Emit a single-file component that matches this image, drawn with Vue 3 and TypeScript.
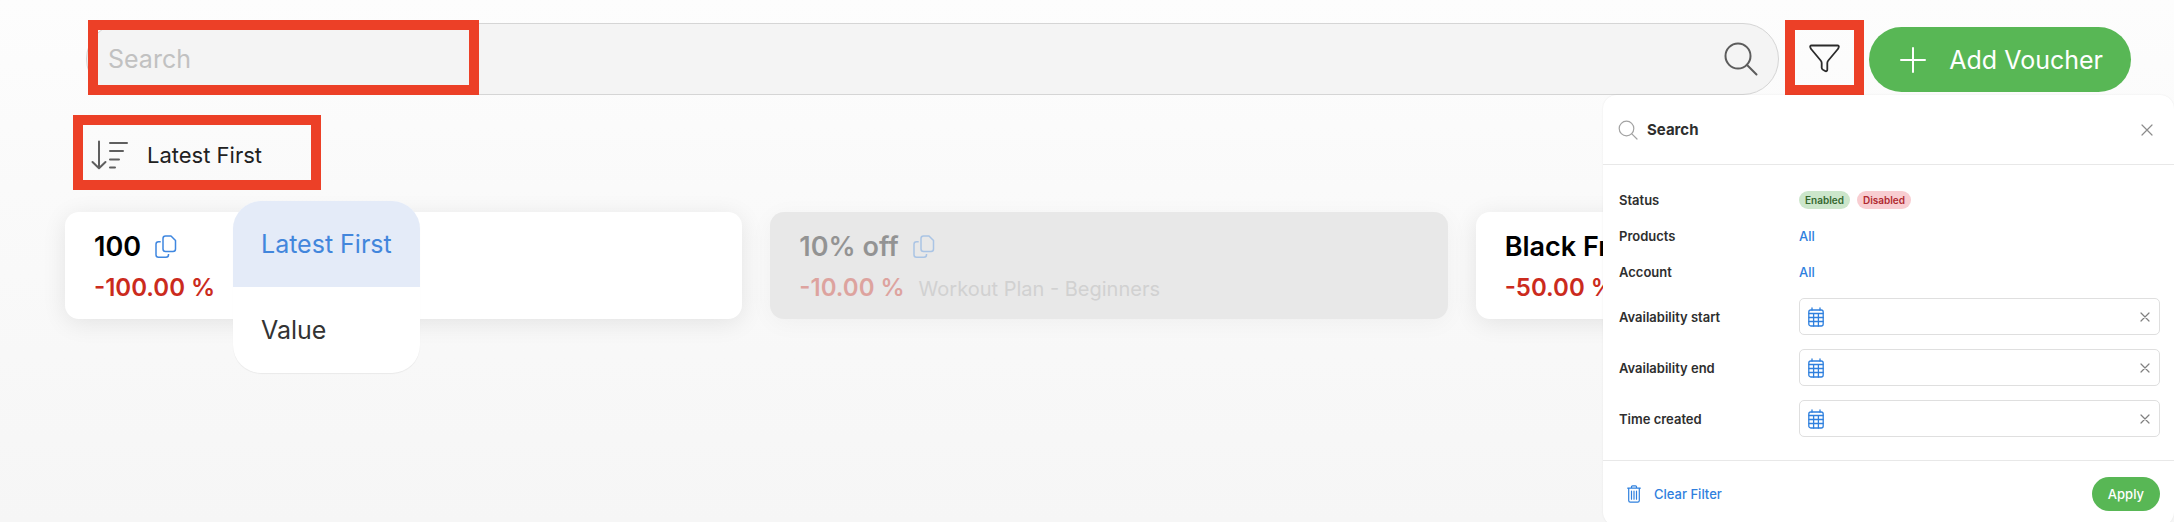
<script setup lang="ts">
import { ref } from 'vue'

interface Voucher {
  name: string
  discount: string
  product?: string
  disabled?: boolean
}

interface DateField {
  id: string
  label: string
}

const vouchers: Voucher[] = [
  { name: '100', discount: '-100.00 %' },
  { name: '10% off', discount: '-10.00 %', product: 'Workout Plan - Beginners', disabled: true },
  { name: 'Black Fr', discount: '-50.00 %' },
]

const sortOptions: string[] = ['Latest First', 'Value']
const sortBy = ref<string>('Latest First')
const query = ref<string>('')

const dateFields: DateField[] = [
  { id: 'availability-start', label: 'Availability start' },
  { id: 'availability-end', label: 'Availability end' },
  { id: 'time-created', label: 'Time created' },
]
const dates = ref<Record<string, string>>({
  'availability-start': '',
  'availability-end': '',
  'time-created': '',
})

function clearDates(): void {
  dateFields.forEach((field) => {
    dates.value[field.id] = ''
  })
}
</script>

<template>
  <main class="page">
    <header class="toolbar">
      <div class="search marked">
        <input v-model="query" class="search-input" type="text" placeholder="Search" aria-label="Search" />
        <button class="search-button" type="button" aria-label="Run search">
          <svg width="34" height="34" viewBox="0 0 34 34" fill="none" stroke="#5c5c5c" stroke-width="2" stroke-linecap="round">
            <circle cx="14" cy="14" r="12.5" />
            <path d="M22.8 22.8 32.5 32.5" />
          </svg>
        </button>
      </div>
      <button class="filter" type="button" aria-label="Filter">
        <svg width="32" height="30" viewBox="0 0 32 30" fill="none" stroke="#2b2b2b" stroke-width="1.800" stroke-linejoin="round">
          <path d="M2.500 2.500H28.500Q30.300 2.500 29.700 4.300L28.900 6 19.300 17.500Q18.300 18.700 18.300 20V26.500Q18.300 28.500 16.500 28.200L14 26.800Q12.700 26 12.700 24.800V20Q12.700 18.700 11.700 17.500L2.100 6 1.300 4.300Q.7 2.500 2.500 2.500Z" />
        </svg>
      </button>
      <button class="add" type="button">
        <svg width="26" height="26" viewBox="0 0 26 26" fill="none" stroke="#fff" stroke-width="2" stroke-linecap="round">
          <path d="M13 1v24M1 13h24" />
        </svg>
        <span>Add Voucher</span>
      </button>

      <form class="panel" @submit.prevent>
        <div class="panel-head">
          <svg width="20" height="20" viewBox="0 0 20 20" fill="none" stroke="#a3a3a3" stroke-width="1.200" stroke-linecap="round">
            <circle cx="8.500" cy="8.500" r="7.300" />
            <path d="M13.800 13.800 19 19" />
          </svg>
          <h2>Search</h2>
          <button class="icon-button" type="button" aria-label="Close">
            <svg width="12" height="12" viewBox="0 0 12 12" stroke="#8c8c8c" stroke-width="1.200" stroke-linecap="round">
              <path d="M1 1 11 11M11 1 1 11" />
            </svg>
          </button>
        </div>

        <div class="panel-body">
          <div class="row">
            <span>Status</span>
            <div class="badges">
              <button class="badge enabled" type="button">Enabled</button>
              <button class="badge disabled" type="button">Disabled</button>
            </div>
          </div>
          <div class="row">
            <span>Products</span>
            <a href="#products">All</a>
          </div>
          <div class="row">
            <span>Account</span>
            <a href="#account">All</a>
          </div>
          <div v-for="field in dateFields" :key="field.id" class="row date-row">
            <label :for="field.id">{{ field.label }}</label>
            <div class="date-box">
              <svg width="16" height="20" viewBox="0 0 16 20" fill="none" stroke="#2f80de" stroke-width="1.300" stroke-linecap="round">
                <rect x=".8" y="3" width="14.400" height="16" rx="2" />
                <path d="M4 1v2M12 1v2M1 6.500h14M1 10.500h14M1 14.500h14M5.600 6.500V19M10.400 6.500V19" />
              </svg>
              <input :id="field.id" v-model="dates[field.id]" type="text" />
              <button class="icon-button" type="button" :aria-label="'Clear ' + field.label" @click="dates[field.id] = ''">
                <svg width="10" height="10" viewBox="0 0 10 10" stroke="#808080" stroke-width="1.200" stroke-linecap="round">
                  <path d="M1 1 9 9M9 1 1 9" />
                </svg>
              </button>
            </div>
          </div>
        </div>

        <div class="panel-foot">
          <button class="clear" type="button" @click="clearDates">
            <svg width="14" height="18" viewBox="0 0 14 18" fill="none" stroke="#2f80de" stroke-width="1.200" stroke-linecap="round" stroke-linejoin="round">
              <path d="M.7 3.200h12.600M4.500 3V1.800q0-1 1-1h3q1 0 1 1V3M1.700 3.400V15.500q0 1.700 1.600 1.700h7.400q1.600 0 1.600-1.700V3.400M4.500 6.200v8M7 6.200v8M9.500 6.200v8" />
            </svg>
            <span>Clear Filter</span>
          </button>
          <button class="apply" type="submit">Apply</button>
        </div>
      </form>
    </header>

    <div class="sort">
      <button class="sort-button" type="button" aria-haspopup="listbox">
        <svg width="38" height="30" viewBox="0 0 38 30" fill="none" stroke="#5f5f5f" stroke-width="2" stroke-linecap="round" stroke-linejoin="round">
          <path d="M8 1.500V28M1.500 22 8 28.300 14.500 22M19 3h17M19 11h13M19 19.500h9M19 27.500h5" />
        </svg>
        <span>{{ sortBy }}</span>
      </button>
      <div class="menu" role="listbox" aria-label="Sort order">
        <button
          v-for="option in sortOptions"
          :key="option"
          type="button"
          role="option"
          :aria-selected="option === sortBy"
          :class="['menu-item', { selected: option === sortBy }]"
          @click="sortBy = option"
        >
          {{ option }}
        </button>
      </div>
    </div>

    <section class="cards">
      <article v-for="voucher in vouchers" :key="voucher.name" :class="['card', { inactive: voucher.disabled }]">
        <div class="title">
          <h3>{{ voucher.name }}</h3>
          <button class="icon-button" type="button" :aria-label="'Copy ' + voucher.name">
            <svg width="22" height="24" viewBox="0 0 22 24" fill="none" stroke="#3f87e0" stroke-width="1.500" stroke-linejoin="round">
              <path d="M10.500 1H16l4.500 4.500V14q0 2.500-2.500 2.500h-7.500Q8 16.500 8 14V3.500Q8 1 10.500 1Z" />
              <path d="M5.700 6.800H3.500Q1 6.800 1 9.300v10.500q0 2.500 2.500 2.500H11q2.500 0 2.500-2.500v-.8" />
            </svg>
          </button>
        </div>
        <div class="details">
          <strong>{{ voucher.discount }}</strong>
          <span v-if="voucher.product">{{ voucher.product }}</span>
        </div>
      </article>
    </section>
  </main>
</template>

<style>
body {
  margin: 0;
}
</style>

<style scoped>
.page {
  position: relative;
  box-sizing: border-box;
  min-height: 100vh;
  padding-top: 20px;
  overflow: hidden;
  background: linear-gradient(#fdfdfd, #fafafa 36%, #f6f6f6);
  color: #212121;
  font-family: Inter, "Liberation Sans", sans-serif;
}

button,
input {
  margin: 0;
  padding: 0;
  border: 0;
  background: none;
  color: inherit;
  font: inherit;
}

button {
  cursor: pointer;
}

svg {
  display: block;
  flex: none;
}

h2,
h3 {
  margin: 0;
}

a {
  color: #2f80de;
  text-decoration: none;
}

.toolbar {
  position: relative;
  z-index: 3;
  display: flex;
  align-items: center;
  height: 75px;
  padding: 0 43px 0 86px;
}

.search {
  position: relative;
  box-sizing: border-box;
  display: flex;
  flex: 1;
  align-items: center;
  align-self: flex-end;
  height: 72px;
  margin-right: 6px;
  padding: 0 20px 0 21px;
  border: 1px solid #d5d5d5;
  border-radius: 36px;
  background: #f4f4f4;
}

.marked::after {
  position: absolute;
  top: -4px;
  left: 1px;
  box-sizing: border-box;
  width: 391px;
  height: 75px;
  border: 10px solid #ec4027;
  content: "";
  pointer-events: none;
}

.search-input {
  flex: 1;
  min-width: 0;
  height: 100%;
  font-size: 25px;
  outline: none;
}

.search-input::placeholder {
  color: #c1c1c1;
  opacity: 1;
}

.filter {
  box-sizing: border-box;
  display: grid;
  place-items: center;
  width: 79px;
  height: 75px;
  margin-right: 5px;
  border: 10px solid #ec4027;
}

.add {
  display: flex;
  align-items: center;
  gap: 23px;
  height: 65px;
  margin-top: 4px;
  padding: 0 28px 0 31px;
  border-radius: 33px;
  background: #58b755;
  color: #fff;
  font-size: 25px;
  white-space: nowrap;
}

.panel {
  position: absolute;
  top: 100%;
  right: 0;
  box-sizing: border-box;
  width: 571px;
  max-width: 100%;
  border-radius: 14px;
  background: #fff;
  box-shadow: 0 0 2px rgba(0, 0, 0, 0.08);
  color: #2e2e2e;
  font-size: 13px;
  font-weight: 600;
}

.panel-head {
  display: flex;
  align-items: center;
  gap: 9px;
  height: 69px;
  padding: 0 21px 0 15px;
  border-bottom: 1px solid #e8e8e8;
}

.panel-head h2 {
  flex: 1;
  font-size: 15px;
  font-weight: 700;
}

.icon-button {
  display: grid;
  place-items: center;
}

.panel-body {
  padding: 17px 14px 23px 16px;
}

.row {
  display: grid;
  grid-template-columns: 180px 1fr;
  align-items: center;
  height: 36px;
}

.date-row {
  height: 37px;
  margin-bottom: 14px;
}

.row + .date-row {
  margin-top: 8px;
}

.date-row + .date-row {
  margin-top: 0;
}

.date-row:last-child {
  margin-bottom: 0;
}

.badges {
  display: flex;
  gap: 7px;
}

.badge {
  height: 18px;
  padding: 0 6px;
  border-radius: 9px;
  font-size: 10px;
  font-weight: 600;
}

.enabled {
  background: #cce6cb;
  color: #35682f;
}

.disabled {
  background: #f8cdd1;
  color: #b02a30;
}

.row a {
  font-weight: 500;
}

.date-box {
  box-sizing: border-box;
  display: flex;
  align-items: center;
  height: 37px;
  padding: 0 9px 0 8px;
  border: 1px solid #dfdfdf;
  border-radius: 5px;
}

.date-box input {
  flex: 1;
  min-width: 0;
  height: 100%;
  padding: 0 8px;
  outline: none;
}

.panel-foot {
  display: flex;
  align-items: center;
  justify-content: space-between;
  height: 65px;
  padding: 0 14px 0 24px;
  border-top: 1px solid #e8e8e8;
}

.clear {
  display: flex;
  align-items: center;
  gap: 13px;
  color: #2f80de;
  font-weight: 500;
}

.apply {
  height: 34px;
  padding: 0 16px;
  border-radius: 17px;
  background: #58b755;
  color: #fff;
  font-weight: 500;
}

.sort {
  position: relative;
  z-index: 2;
  width: 248px;
  margin: 20px 0 22px 73px;
}

.sort-button {
  box-sizing: border-box;
  display: flex;
  align-items: center;
  gap: 18px;
  width: 100%;
  height: 75px;
  padding: 5px 8px 0 8px;
  border: 10px solid #ec4027;
  font-size: 22px;
}

.menu {
  position: absolute;
  top: 86px;
  left: 160px;
  display: flex;
  flex-direction: column;
  width: 187px;
  border-radius: 28px;
  overflow: hidden;
  background: #fff;
  box-shadow: 0 1px 1px rgba(0, 0, 0, 0.06);
}

.menu-item {
  box-sizing: border-box;
  height: 86px;
  padding: 0 0 1px 28px;
  color: #333;
  font-size: 25px;
  text-align: left;
  white-space: nowrap;
}

.menu-item.selected {
  background: #e4ebf8;
  color: #4286dc;
}

.cards {
  display: grid;
  grid-template-columns: repeat(3, minmax(0, 1fr));
  gap: 28px;
  padding: 0 21px 0 65px;
}

.card {
  box-sizing: border-box;
  height: 107px;
  padding: 18px 29px;
  border-radius: 14px;
  background: #fff;
  box-shadow: 0 4px 24px rgba(0, 0, 0, 0.09);
  white-space: nowrap;
}

.title {
  display: flex;
  align-items: center;
  gap: 14px;
  height: 33px;
  color: #000;
}

.title h3 {
  font-size: 27px;
  font-weight: 600;
}

.details {
  display: flex;
  align-items: baseline;
  gap: 14px;
  margin-top: 10px;
  font-size: 20px;
  line-height: 30px;
}

.details strong {
  color: #cb2b1d;
  font-size: 24px;
  font-weight: 600;
}

.card.inactive {
  background: #e8e8e8;
  box-shadow: 0 4px 24px rgba(0, 0, 0, 0.04);
}

.inactive .title,
.inactive .details strong {
  opacity: 0.36;
}

.inactive .details span {
  color: #d1d1d1;
}
</style>
